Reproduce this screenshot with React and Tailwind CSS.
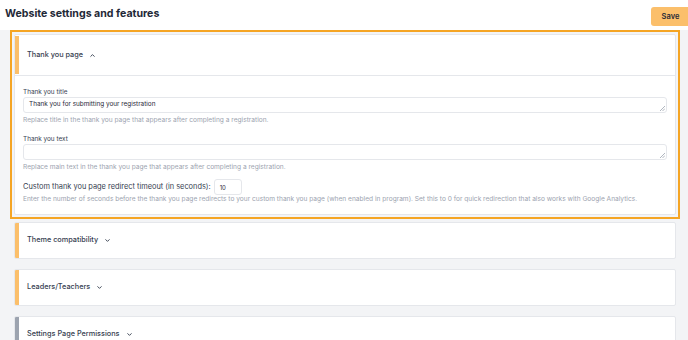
import React from "react";

function Chevron({ up }) {
  return (
    <svg width="7" height="7" viewBox="0 0 24 24" fill="none" stroke="#374151" strokeWidth="3.2" strokeLinecap="round" strokeLinejoin="round" className="ml-[6px]">
      {up ? <path d="M6 15l6-6 6 6" /> : <path d="M6 9l6 6 6-6" />}
    </svg>
  );
}

function CollapsedCard({ title, bar }) {
  return (
    <div className="flex h-[37px] bg-white border border-[#e5e7eb] rounded-[2px] overflow-hidden">
      <div className={`w-[4px] ${bar}`} />
      <div className="flex items-center pl-[8px] text-[7.3px] font-medium text-[#374151]">
        {title}
        <Chevron />
      </div>
    </div>
  );
}

function Grip() {
  return (
    <svg className="absolute right-[1px] bottom-[1px]" width="5" height="5" viewBox="0 0 5 5">
      <path d="M5 0L0 5M5 2.5L2.5 5" stroke="#9ca3af" strokeWidth="0.8" />
    </svg>
  );
}

export default function App() {
  return (
    <div className="w-[688px] h-[340px] overflow-hidden bg-[#f3f4f6]" style={{ fontFamily: "Inter, 'Noto Sans', sans-serif" }}>
      <div className="h-[30px] bg-white flex items-start justify-between">
        <h1 className="pl-[5px] pt-[7px] text-[10.6px] font-bold text-[#1f2937] leading-[14px]">Website settings and features</h1>
        <button className="mt-[7px] h-[19px] w-[37px] rounded-l-[3px] bg-[#fbbf6b] text-[7.5px] font-semibold text-[#1f2937] pl-[2px]">Save</button>
      </div>
      <div className="pl-[10px] pr-[8px] flex flex-col">
        <div className="border-2 border-[#f5a524] p-[2px] w-[670px]">
          <div className="bg-white border border-[#e5e7eb] rounded-[2px]">
            <div className="flex h-[41px] border-b border-[#e5e7eb]">
              <div className="w-[4px] bg-[#fbbf6b] my-[1px]" />
              <div className="flex items-center pl-[8px] text-[7.3px] font-medium text-[#374151]">
                Thank you page
                <Chevron up />
              </div>
            </div>
            <div className="px-[8px] pt-[12px] pb-[10px] text-[#374151]">
              <div className="text-[6.4px] leading-[9px]">Thank you title</div>
              <div className="relative h-[16px] border border-[#e5e7eb] rounded-[3px] px-[5px] flex items-center text-[6.4px] text-[#1f2937]">
                Thank you for submitting your registration
                <Grip />
              </div>
              <div className="mt-[3px] text-[6.6px] leading-[9px] text-[#9ca3af]">Replace title in the thank you page that appears after completing a registration.</div>
              <div className="mt-[10px] text-[6.4px] leading-[9px]">Thank you text</div>
              <div className="relative h-[16px] border border-[#e5e7eb] rounded-[3px]">
                <Grip />
              </div>
              <div className="mt-[3px] text-[6.6px] leading-[9px] text-[#9ca3af]">Replace main text in the thank you page that appears after completing a registration.</div>
              <div className="mt-[7px] flex items-center text-[7.4px]">
                <span>Custom thank you page redirect timeout (in seconds):</span>
                <div className="ml-[3px] w-[28px] h-[16px] border border-[#e5e7eb] rounded-[3px] flex items-center pl-[5px] text-[6px] text-[#1f2937]">10</div>
              </div>
              <div className="mt-0 text-[6.6px] leading-[9px] text-[#9ca3af]">Enter the number of seconds before the thank you page redirects to your custom thank you page (when enabled in program). Set this to 0 for quick redirection that also works with Google Analytics.</div>
            </div>
          </div>
        </div>
        <div className="w-[662px] ml-[4px] mt-[3px] flex flex-col gap-[10px]">
          <CollapsedCard title="Theme compatibility" bar="bg-[#fbbf6b]" />
          <CollapsedCard title="Leaders/Teachers" bar="bg-[#fbbf6b]" />
          <CollapsedCard title="Settings Page Permissions" bar="bg-[#9ca3af]" />
        </div>
      </div>
    </div>
  );
}
